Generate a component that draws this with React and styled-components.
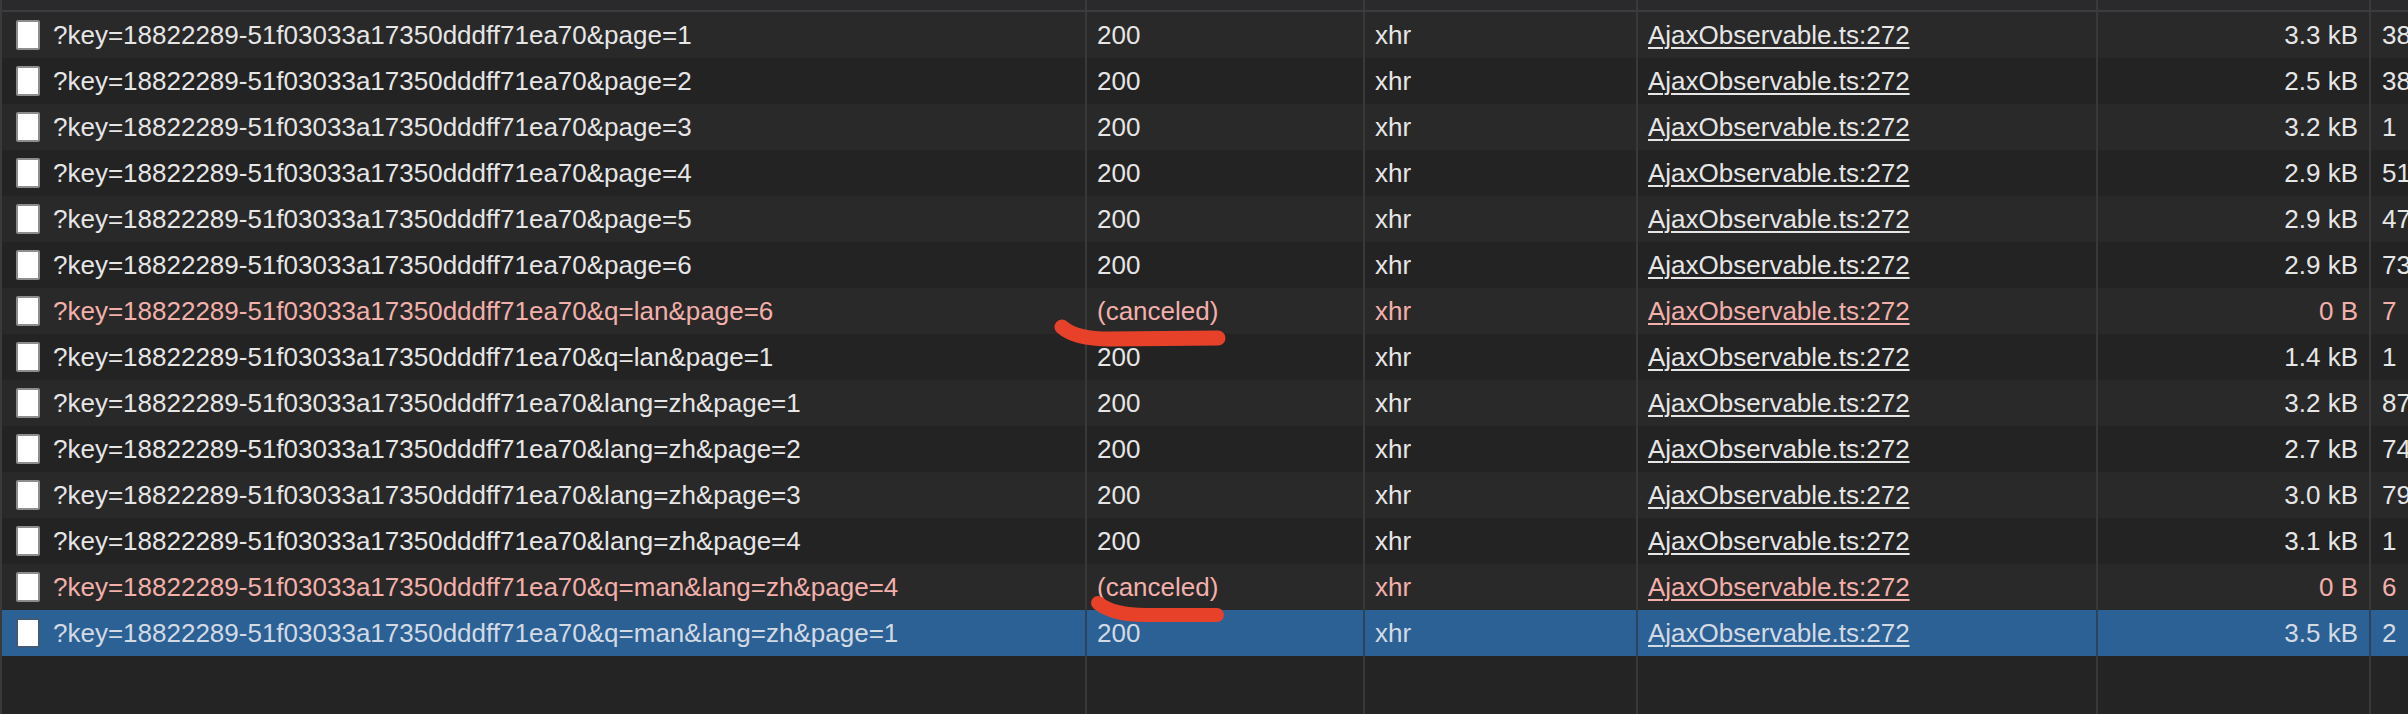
import React from 'react';
import styled, { createGlobalStyle, css } from 'styled-components';

const GlobalStyle = createGlobalStyle`
  html, body {
    margin: 0;
    padding: 0;
    background: #242424;
    overflow: hidden;
  }
  body {
    font-family: "Liberation Sans", Arial, Helvetica, sans-serif;
  }
`;

const COLS = '1085px 278px 273px 460px 273px 1fr';

const Panel = styled.div`
  position: relative;
  width: 2408px;
  height: 714px;
  display: flex;
  flex-direction: column;
  background: #242424;
  border-left: 2px solid #3a3a3c;
  box-sizing: border-box;
  overflow: hidden;
`;

const HeaderRow = styled.div`
  display: grid;
  grid-template-columns: ${COLS};
  height: 10px;
  flex: 0 0 auto;
  background: #2a2a2d;
  border-bottom: 2px solid #3c3c3f;
`;

const HeaderCell = styled.div`
  border-right: ${p => (p.$last ? 'none' : '2px solid #3a3a3d')};
`;

const tones = {
  normal: css`
    color: #e6e6e6;
  `,
  error: css`
    color: #f3b0ab;
  `,
  selected: css`
    color: #d3dae3;
    background: #2c6196 !important;
  `,
};

const Row = styled.div`
  display: grid;
  grid-template-columns: ${COLS};
  height: 46px;
  flex: 0 0 auto;
  font-size: 26px;
  line-height: 46px;
  background: ${p => (p.$odd ? '#292929' : '#232323')};
  ${p => tones[p.$tone]}
`;

const Cell = styled.div`
  display: flex;
  align-items: center;
  justify-content: ${p => (p.$right ? 'flex-end' : 'flex-start')};
  padding: 0 ${p => (p.$right ? '11px' : '0')} 0 ${p => p.$pl ?? 10}px;
  white-space: nowrap;
  overflow: hidden;
  border-right: ${p => (p.$last ? 'none' : `2px solid ${p.$sel ? '#2a4460' : '#383838'}`)};
`;

const FileIcon = styled.span`
  flex: 0 0 auto;
  width: 24px;
  height: 30px;
  box-sizing: border-box;
  background: #ffffff;
  border: 2px solid ${p => (p.$sel ? '#3f5a78' : '#8d8d8d')};
  border-radius: 2px;
  margin-right: 13px;
`;

const Link = styled.span`
  text-decoration: underline;
  text-decoration-thickness: 2px;
  text-underline-offset: 3px;
`;

const Filler = styled.div`
  flex: 1 1 auto;
  display: grid;
  grid-template-columns: ${COLS};
  background: #242424;
`;

const FillerCell = styled.div`
  border-right: ${p => (p.$last ? 'none' : '2px solid #383838')};
`;

const Marks = styled.svg`
  position: absolute;
  left: -2px;
  top: 0;
  width: 2408px;
  height: 714px;
  pointer-events: none;
`;

const base = '?key=18822289-51f03033a17350dddff71ea70';

const rows = [
  { q: '&page=1', status: '200', size: '3.3 kB', time: '38' },
  { q: '&page=2', status: '200', size: '2.5 kB', time: '38' },
  { q: '&page=3', status: '200', size: '3.2 kB', time: '1' },
  { q: '&page=4', status: '200', size: '2.9 kB', time: '51' },
  { q: '&page=5', status: '200', size: '2.9 kB', time: '47' },
  { q: '&page=6', status: '200', size: '2.9 kB', time: '73' },
  { q: '&q=lan&page=6', status: '(canceled)', size: '0 B', time: '7', tone: 'error' },
  { q: '&q=lan&page=1', status: '200', size: '1.4 kB', time: '1' },
  { q: '&lang=zh&page=1', status: '200', size: '3.2 kB', time: '87' },
  { q: '&lang=zh&page=2', status: '200', size: '2.7 kB', time: '74' },
  { q: '&lang=zh&page=3', status: '200', size: '3.0 kB', time: '79' },
  { q: '&lang=zh&page=4', status: '200', size: '3.1 kB', time: '1' },
  { q: '&q=man&lang=zh&page=4', status: '(canceled)', size: '0 B', time: '6', tone: 'error' },
  { q: '&q=man&lang=zh&page=1', status: '200', size: '3.5 kB', time: '2', tone: 'selected' },
];

export default function App() {
  return (
    <>
      <GlobalStyle />
      <Panel>
        <HeaderRow>
          <HeaderCell />
          <HeaderCell />
          <HeaderCell />
          <HeaderCell />
          <HeaderCell />
          <HeaderCell $last />
        </HeaderRow>
        {rows.map((r, i) => {
          const sel = r.tone === 'selected';
          return (
            <Row key={i} $odd={i % 2 === 0} $tone={r.tone || 'normal'}>
              <Cell $pl={14} $sel={sel}>
                <FileIcon $sel={sel} />
                {base + r.q}
              </Cell>
              <Cell $sel={sel}>{r.status}</Cell>
              <Cell $sel={sel}>xhr</Cell>
              <Cell $sel={sel}>
                <Link>AjaxObservable.ts:272</Link>
              </Cell>
              <Cell $right $sel={sel}>{r.size}</Cell>
              <Cell $last $pl={11} $sel={sel}>{r.time}</Cell>
            </Row>
          );
        })}
        <Filler>
          <FillerCell />
          <FillerCell />
          <FillerCell />
          <FillerCell />
          <FillerCell />
          <FillerCell $last />
        </Filler>
        <Marks viewBox="0 0 2408 714">
          <path
            d="M1062 327 C1072 336 1088 339 1110 339 L1218 338"
            fill="none"
            stroke="#e8412a"
            strokeWidth="15"
            strokeLinecap="round"
            strokeLinejoin="round"
          />
          <path
            d="M1098 603 C1108 611 1124 615 1146 615 L1217 615"
            fill="none"
            stroke="#e8412a"
            strokeWidth="14"
            strokeLinecap="round"
            strokeLinejoin="round"
          />
        </Marks>
      </Panel>
    </>
  );
}
